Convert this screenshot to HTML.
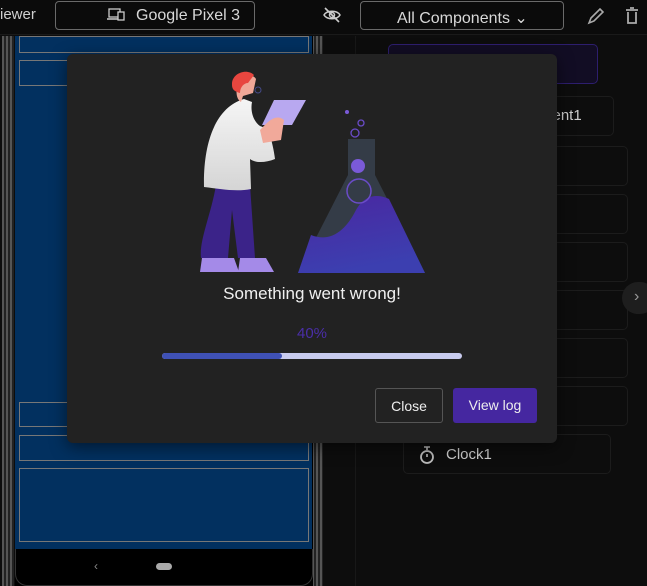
<!DOCTYPE html>
<html><head><style>
body{margin:0;width:647px;height:586px;background:#0d0d0d;position:relative;overflow:hidden;font-family:"Liberation Sans",sans-serif;color:#ddd}
.a{position:absolute;box-sizing:border-box}
.card{position:absolute;box-sizing:border-box;border:1px solid #1c1c1c;border-radius:5px}
</style></head><body>
<div class="a" style="left:0;top:0;width:647px;height:35px;background:#0b0b0b;border-bottom:1px solid #1a1a1a"></div>
<div class="a" style="left:0;top:6px;font-size:15px;color:#cfcfcf">iewer</div>
<div class="a" style="left:55px;top:1px;width:200px;height:29px;border:1px solid #6a6a6a;border-radius:4px;font-size:16px;color:#d8d8d8;padding:5px 0 0 80px">Google Pixel 3 &nbsp;⌄</div>
<svg class="a" style="left:107px;top:8px" width="18" height="14"><rect x="2" y="1" width="11" height="8" fill="none" stroke="#ccc" stroke-width="1.3"/><path d="M0 11h13" stroke="#ccc" stroke-width="1.5"/><rect x="11" y="4" width="6" height="8" fill="#0b0b0b" stroke="#ccc" stroke-width="1.3"/></svg>
<svg class="a" style="left:322px;top:6px" width="20" height="18"><path d="M2 9c3-5 13-5 16 0c-3 5-13 5-16 0z" fill="none" stroke="#ccc" stroke-width="1.5"/><circle cx="10" cy="9" r="2.5" fill="none" stroke="#ccc" stroke-width="1.5"/><path d="M3 2l14 14" stroke="#ccc" stroke-width="1.6"/></svg>
<div class="a" style="left:360px;top:1px;width:204px;height:29px;border:1px solid #6a6a6a;border-radius:4px;font-size:16px;color:#d8d8d8;padding:6px 0 0 36px">All Components ⌄</div>
<svg class="a" style="left:586px;top:6px" width="20" height="20"><path d="M3 17l2-5 9-9 3 3-9 9z" fill="none" stroke="#aaa" stroke-width="1.6"/></svg>
<svg class="a" style="left:624px;top:7px" width="16" height="18"><path d="M2 3h12M6 1h4M4 5v11h8V5" fill="none" stroke="#aaa" stroke-width="1.8"/></svg>
<div class="a" style="left:2px;top:36px;width:12px;height:550px;background:repeating-linear-gradient(90deg,#555 0 2px,#222 2px 4px)"></div>
<div class="a" style="left:312px;top:36px;width:11px;height:550px;background:repeating-linear-gradient(90deg,#555 0 2px,#222 2px 4px)"></div>
<div class="a" style="left:15px;top:36px;width:298px;height:550px;background:#000"></div>
<div class="a" style="left:15px;top:36px;width:297px;height:513px;background:#02305f"></div>
<div class="a" style="left:19px;top:36px;width:290px;height:17px;border:1px solid #777"></div>
<div class="a" style="left:19px;top:60px;width:290px;height:26px;border:1px solid #777"></div>
<div class="a" style="left:19px;top:402px;width:290px;height:25px;border:1px solid #777"></div>
<div class="a" style="left:19px;top:435px;width:290px;height:26px;border:1px solid #777"></div>
<div class="a" style="left:19px;top:468px;width:290px;height:74px;border:1px solid #777"></div>
<div class="a" style="left:94px;top:559px;font-size:12px;color:#888">‹</div>
<div class="a" style="left:156px;top:563px;width:16px;height:7px;border-radius:4px;background:#aaa"></div>
<div class="a" style="left:15px;top:549px;width:298px;height:37px;border:1px solid #333;border-top:none;border-radius:0 0 12px 12px"></div>
<div class="a" style="left:355px;top:36px;width:1px;height:550px;background:#181818"></div>
<div class="a" style="left:388px;top:44px;width:210px;height:40px;border:1px solid #2d1e6e;border-radius:5px;background:#120d24"></div>
<div class="card" style="left:388px;top:96px;width:226px;height:40px"></div>
<div class="a" style="left:540px;top:107px;font-size:15px;color:#ccc">ment1</div>
<div class="card" style="left:403px;top:146px;width:225px;height:40px"></div>
<div class="card" style="left:403px;top:194px;width:225px;height:40px"></div>
<div class="card" style="left:403px;top:242px;width:225px;height:40px"></div>
<div class="card" style="left:403px;top:290px;width:225px;height:40px"></div>
<div class="card" style="left:403px;top:338px;width:225px;height:40px"></div>
<div class="card" style="left:403px;top:386px;width:225px;height:40px"></div>
<div class="card" style="left:403px;top:434px;width:208px;height:40px"></div>
<svg class="a" style="left:418px;top:445px" width="18" height="20"><path d="M6 2h6M9 2v3" stroke="#bbb" stroke-width="1.6"/><circle cx="9" cy="12" r="6" fill="none" stroke="#bbb" stroke-width="1.8"/><path d="M9 12V9" stroke="#bbb" stroke-width="1.6"/></svg>
<div class="a" style="left:446px;top:446px;font-size:15px;color:#ccc">Clock1</div>
<div class="a" style="left:622px;top:282px;width:34px;height:32px;border-radius:16px;background:#1e1e1e;color:#999;font-size:16px;padding:6px 0 0 12px">›</div>
<div class="a" style="left:67px;top:54px;width:490px;height:389px;background:#222;border-radius:6px;box-shadow:0 4px 16px rgba(0,0,0,.5)"></div>
<svg class="a" style="left:180px;top:60px" width="260" height="220">
<defs>
<linearGradient id="f" x1="0" y1="0" x2="0.3" y2="1"><stop offset="0" stop-color="#4a27a0"/><stop offset="1" stop-color="#3c3fb0"/></linearGradient>
<linearGradient id="c" x1="0" y1="0" x2="0" y2="1"><stop offset="0" stop-color="#f5f5f5"/><stop offset="1" stop-color="#d5d5d5"/></linearGradient>
</defs>
<path d="M168 79h27v36l50 98H118l50-98z" fill="#343c47"/>
<path d="M131 175c20 8 35-5 45-25c10-18 25-15 33-11l36 74H118z" fill="url(#f)"/>
<circle cx="178" cy="106" r="7" fill="#7a5ad8"/>
<circle cx="179" cy="131" r="12" fill="none" stroke="#6a4cc8" stroke-width="1.5"/>
<circle cx="167" cy="52" r="2" fill="#7a5ad8"/>
<circle cx="181" cy="63" r="3" fill="none" stroke="#6a4cc8" stroke-width="1.3"/>
<circle cx="175" cy="73" r="4" fill="none" stroke="#6a4cc8" stroke-width="1.3"/>
<path d="M36 125c-5 30-17 55-15 73h27l4-48 6 48h17l-5-73z" fill="#3b2389"/>
<path d="M22 198h32l5 14H20z" fill="#a48ae8"/>
<path d="M60 198h26l8 14H58z" fill="#a48ae8"/>
<path d="M24 127c-1-45 12-80 40-88l8 3c-2 10 2 20 8 24l8 3c4 12 6 22 7 30c-10 4-20 4-25 0l1 30c-15 3-30 0-47-2z" fill="url(#c)"/>
<path d="M94 40l32 0-14 25-30 0z" fill="#b8a8f0"/>
<path d="M80 70c5-5 15-18 24-10l-3 20-18 3z" fill="#f1a99a"/>
<path d="M57 24c0-10 15-12 19-5l-3 14-10 3-2 6c-5-3-5-10-4-18z" fill="#f0a898"/>
<path d="M52 24c0-11 15-16 22-9l-6 8c-4 0-8 4-8 10c-8-2-8-6-8-9z" fill="#e8463f"/>
<circle cx="78" cy="30" r="3" fill="none" stroke="#444a88" stroke-width="1"/>
</svg>
<div class="a" style="left:67px;top:284px;width:490px;text-align:center;font-size:17px;color:#f0f0f0">Something went wrong!</div>
<div class="a" style="left:67px;top:325px;width:490px;text-align:center;font-size:15px;color:#4a2ea8">40%</div>
<div class="a" style="left:162px;top:353px;width:300px;height:6px;border-radius:3px;background:#c8cbee"></div>
<div class="a" style="left:162px;top:353px;width:120px;height:6px;border-radius:3px;background:#3f51b5"></div>
<div class="a" style="left:375px;top:388px;width:68px;height:35px;border:1px solid #555;border-radius:3px;font-size:14px;color:#eee;text-align:center;line-height:34px">Close</div>
<div class="a" style="left:453px;top:388px;width:84px;height:35px;background:#4527a0;border-radius:3px;font-size:14px;color:#eee;text-align:center;line-height:34px">View log</div>
</body></html>
